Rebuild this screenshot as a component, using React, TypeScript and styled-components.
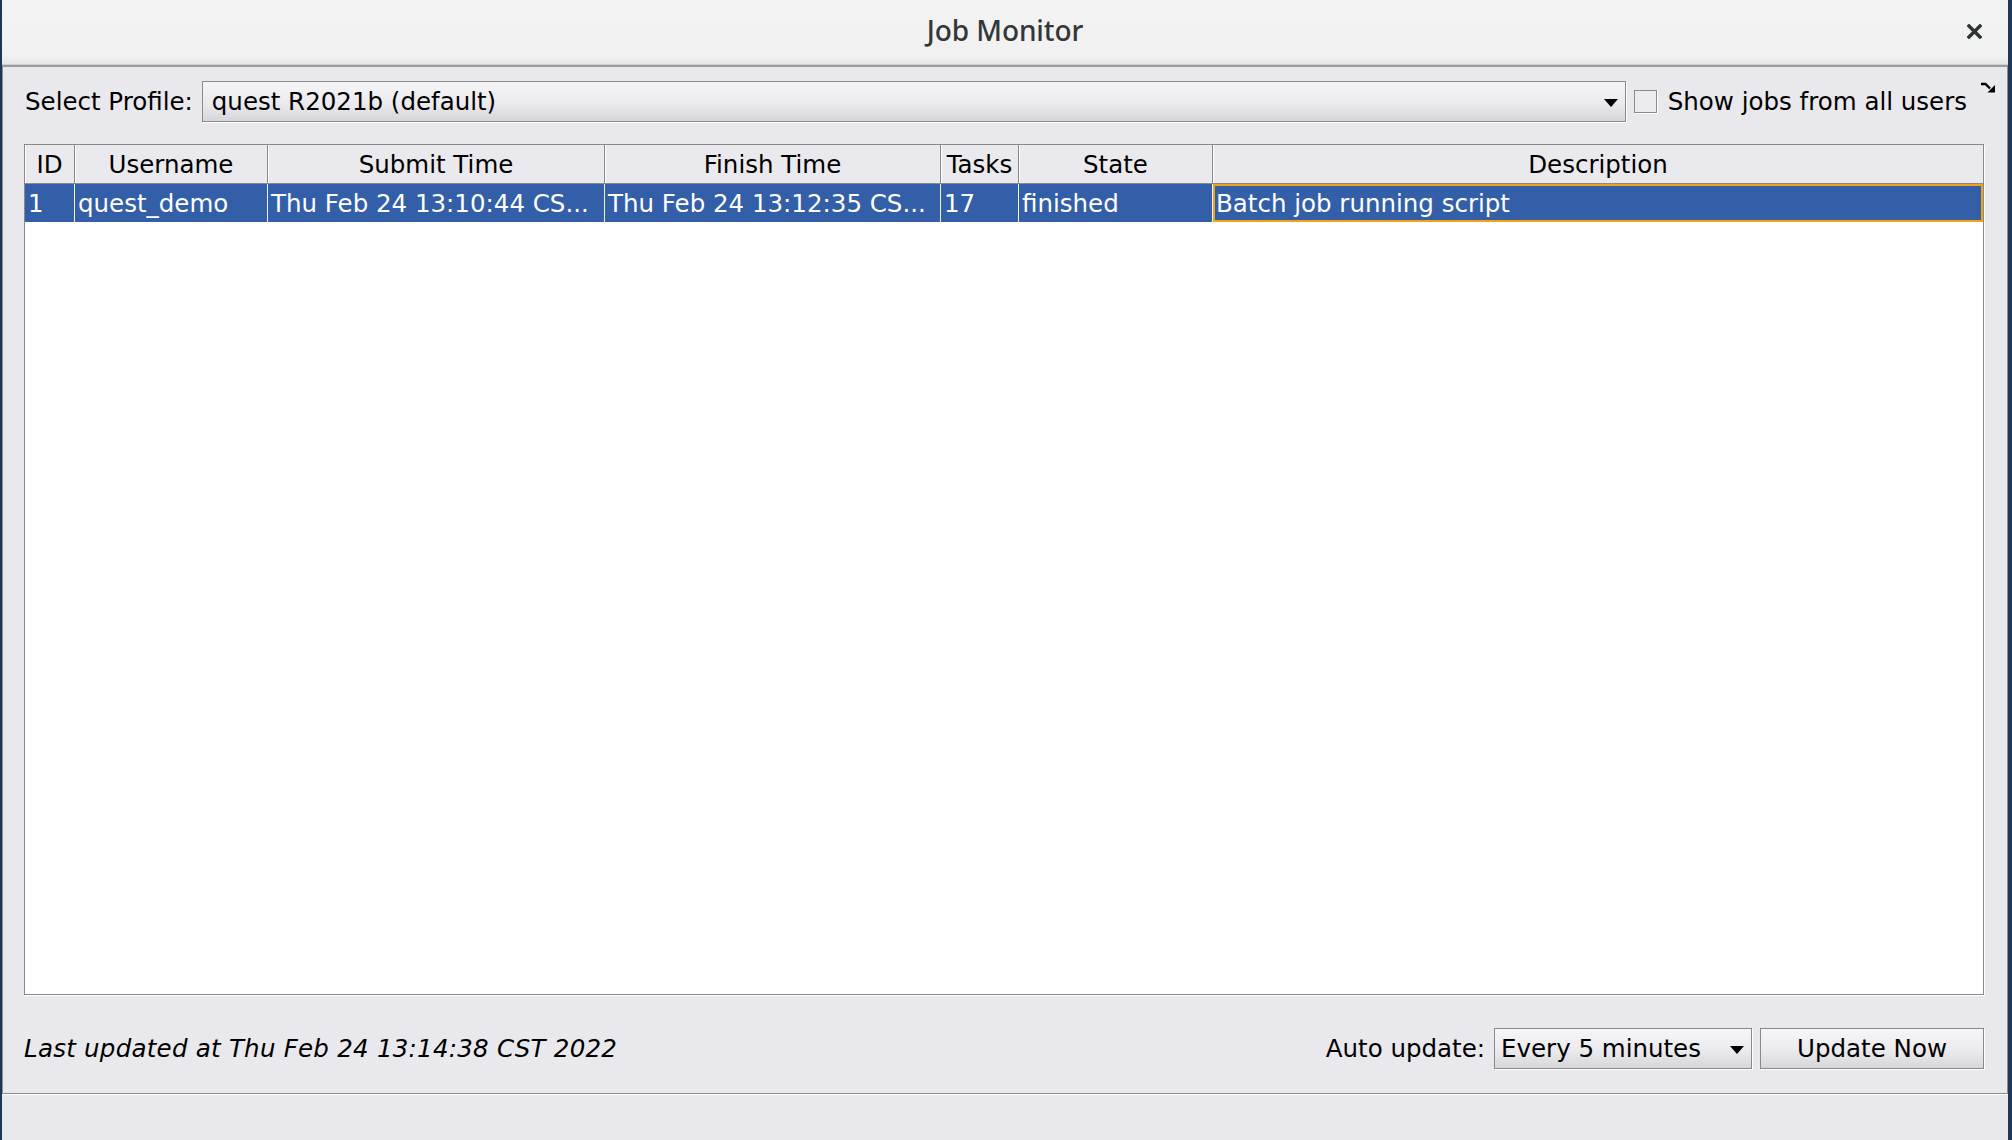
import React from "react";
import styled, { createGlobalStyle } from "styled-components";

const GlobalStyle = createGlobalStyle`
  html, body {
    margin: 0;
    padding: 0;
    background: #1f3556;
  }
  body {
    width: 2012px;
    height: 1140px;
    overflow: hidden;
  }
  #root { height: 100%; }
`;

const Desktop = styled.div`
  height: 1140px;
  display: flex;
  padding: 0 4px 0 2px;
  box-sizing: border-box;
  background: #1f3556;
`;

const Window = styled.div`
  flex: 1;
  display: flex;
  flex-direction: column;
  background: #e9e8ec;
  font-family: "DejaVu Sans", "Liberation Sans", sans-serif;
  font-size: 24.5px;
  color: #000;
`;

const TitleBar = styled.div`
  flex: none;
  height: 65px;
  box-sizing: border-box;
  display: grid;
  grid-template-columns: 1fr auto 1fr;
  align-items: center;
  padding-bottom: 5px;
  background: linear-gradient(#f3f3f3, #f1f1f1 88%, #e6e6e6);
  border-bottom: 1px solid #cfcfcf;
`;

const Title = styled.div`
  grid-column: 2;
  font-family: "Noto Sans", "DejaVu Sans", sans-serif;
  font-weight: 500;
  font-size: 28px;
  color: #333738;
  letter-spacing: -0.1px;
`;

const CloseButton = styled.div`
  grid-column: 3;
  justify-self: end;
  margin-right: 26px;
  margin-top: 3px;
  width: 15px;
  height: 15px;
  display: flex;
`;

const Panel = styled.div`
  position: relative;
  flex: none;
  height: 1029px;
  box-sizing: border-box;
  display: flex;
  flex-direction: column;
  padding: 14px 23px 24px 21px;
  border: 1px solid #8c8c8c;
  border-top: 2px solid #9b9b9b;
`;

const Footer = styled.div`
  flex: 1;
  box-shadow: inset 0 1px 0 #fbfbfc;
  background: #e9e8ec;
`;

const TopRow = styled.div`
  flex: none;
  height: 41px;
  display: flex;
  align-items: center;
`;

const Label = styled.span<{ $ml?: number }>`
  white-space: nowrap;
  margin-left: ${(p) => p.$ml ?? 0}px;
  margin-right: 9px;
`;

const Combo = styled.div<{ $width?: number; $pad: number }>`
  box-sizing: border-box;
  height: 41px;
  ${(p) => (p.$width ? `width: ${p.$width}px; flex: none;` : "flex: 1;")}
  display: flex;
  align-items: center;
  padding: 0 7px 0 ${(p) => p.$pad}px;
  border: 1px solid #8a8a8a;
  box-shadow: 1px 1px 0 #ffffff;
  background: linear-gradient(#f6f6f8, #ebeaee 55%, #d6d5d9);
  white-space: nowrap;
`;

const ComboText = styled.span`
  flex: 1;
  overflow: hidden;
`;

const Arrow = styled.span`
  width: 0;
  height: 0;
  border-left: 7px solid transparent;
  border-right: 7px solid transparent;
  border-top: 8px solid #000;
  margin-top: 2px;
`;

const Checkbox = styled.span`
  flex: none;
  box-sizing: border-box;
  width: 23px;
  height: 23px;
  margin: 0 11px 0 8px;
  border: 1px solid #8a8a8a;
  background: #ecebef;
  box-shadow: 1px 1px 0 #ffffff;
`;

const CheckLabel = styled.span`
  white-space: nowrap;
  margin-right: 17px;
`;

const UndockIcon = styled.div`
  position: absolute;
  top: 15px;
  right: 11px;
  width: 16px;
  height: 11px;
  display: flex;
`;

const Table = styled.div`
  flex: 1;
  margin-top: 22px;
  margin-bottom: 33px;
  display: flex;
  flex-direction: column;
  border: 1px solid #8a8a8a;
  box-shadow: 1px 1px 0 #ffffff;
  background: #ffffff;
  overflow: hidden;
`;

const COLS = "50px 193px 337px 336px 78px 194px 1fr";

const HeaderRow = styled.div`
  display: grid;
  grid-template-columns: ${COLS};
  height: 39px;
  box-sizing: border-box;
  border-bottom: 1px solid #8a8a8a;
  background: #eae9ed;
`;

const HeaderCell = styled.div`
  display: flex;
  align-items: center;
  justify-content: center;
  white-space: nowrap;
  overflow: hidden;
  border-right: 1px solid #8a8a8a;
  box-shadow: inset 1px 0 0 #ffffff;
  &:last-child { border-right: none; }
`;

const DataRow = styled.div`
  display: grid;
  grid-template-columns: ${COLS};
  height: 38px;
`;

const DataCell = styled.div<{ $focused?: boolean }>`
  display: flex;
  align-items: center;
  padding-left: 3px;
  white-space: nowrap;
  overflow: hidden;
  background: #335ea8;
  color: #ffffff;
  border-right: 1px solid #eef0f4;
  ${(p) => (p.$focused ? "box-shadow: inset 0 0 0 2px #f3a214; border-right: none;" : "")}
`;

const BottomRow = styled.div`
  flex: none;
  height: 41px;
  display: flex;
  align-items: center;
`;

const Status = styled.span`
  font-style: oblique;
  letter-spacing: 0.25px;
  white-space: nowrap;
  flex: 1;
`;

const Button = styled.div`
  box-sizing: border-box;
  width: 224px;
  height: 41px;
  margin-left: 8px;
  display: flex;
  align-items: center;
  justify-content: center;
  border: 1px solid #8a8a8a;
  box-shadow: 1px 1px 0 #ffffff;
  background: linear-gradient(#f6f6f8, #ebeaee 55%, #d6d5d9);
  white-space: nowrap;
`;

const headers = ["ID", "Username", "Submit Time", "Finish Time", "Tasks", "State", "Description"];
const row = [
  "1",
  "quest_demo",
  "Thu Feb 24 13:10:44 CS...",
  "Thu Feb 24 13:12:35 CS...",
  "17",
  "finished",
  "Batch job running script",
];

export default function App() {
  return (
    <>
      <GlobalStyle />
      <Desktop>
        <Window>
          <TitleBar>
            <Title>Job Monitor</Title>
            <CloseButton>
              <svg width="15" height="15" viewBox="0 0 15 15">
                <path d="M2 2 L13 13 M13 2 L2 13" stroke="#2e3436" strokeWidth="3.4" strokeLinecap="square" />
              </svg>
            </CloseButton>
          </TitleBar>
          <Panel>
            <TopRow>
              <Label $ml={1}>Select Profile:</Label>
              <Combo $pad={9}>
                <ComboText>quest R2021b (default)</ComboText>
                <Arrow />
              </Combo>
              <Checkbox />
              <CheckLabel>Show jobs from all users</CheckLabel>
            </TopRow>
            <UndockIcon>
              <svg width="16" height="11" viewBox="0 0 16 11">
                <path d="M1 2 H5.5 L10 6.5" stroke="#000" strokeWidth="2.4" fill="none" />
                <polygon points="15,10.5 15,3 7.5,10.5" fill="#000" />
              </svg>
            </UndockIcon>
            <Table>
              <HeaderRow>
                {headers.map((h) => (
                  <HeaderCell key={h}>{h}</HeaderCell>
                ))}
              </HeaderRow>
              <DataRow>
                {row.map((c, i) => (
                  <DataCell key={i} $focused={i === row.length - 1}>
                    {c}
                  </DataCell>
                ))}
              </DataRow>
            </Table>
            <BottomRow>
              <Status>Last updated at Thu Feb 24 13:14:38 CST 2022</Status>
              <Label>Auto update:</Label>
              <Combo $width={258} $pad={6}>
                <ComboText>Every 5 minutes</ComboText>
                <Arrow />
              </Combo>
              <Button>Update Now</Button>
            </BottomRow>
          </Panel>
          <Footer />
        </Window>
      </Desktop>
    </>
  );
}
